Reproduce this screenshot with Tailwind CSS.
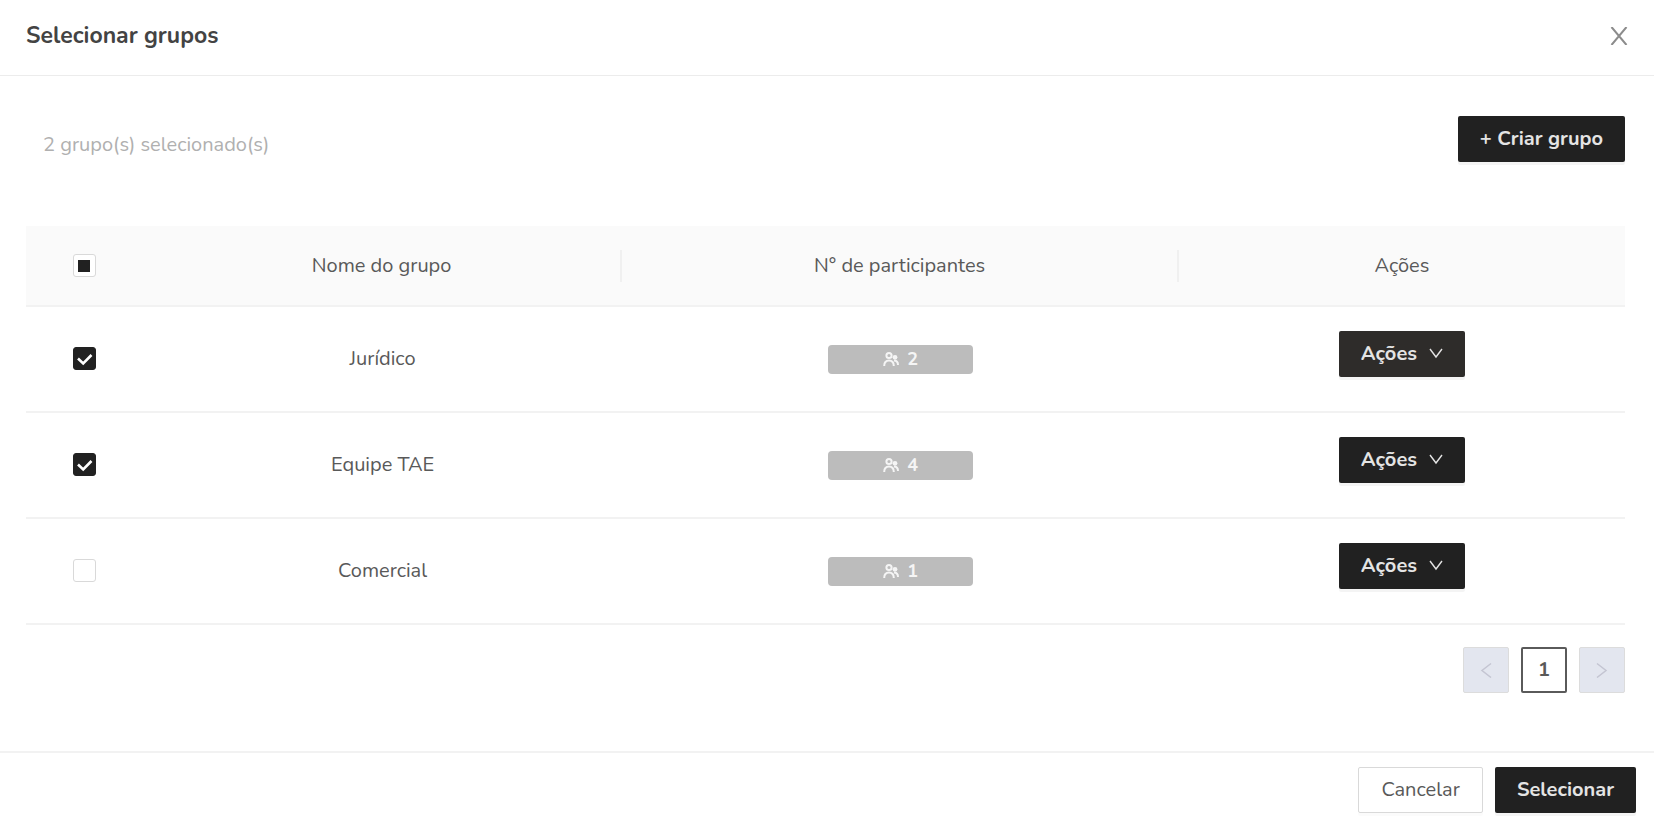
<!DOCTYPE html>
<html lang="pt-BR">
<head>
<meta charset="utf-8">
<meta name="viewport" content="width=device-width, initial-scale=1">
<title>Selecionar grupos</title>
<script src="https://cdn.jsdelivr.net/npm/@tailwindcss/browser@4"></script>
</head>
<body class="min-h-screen bg-white font-['Nunito','Lato',sans-serif] text-xl text-[#595959]">
<svg class="hidden" aria-hidden="true">
  <symbol id="team" viewBox="0 0 16 16" fill="none" stroke="currentColor">
    <circle cx="6" cy="4.500" r="2.600" stroke-width="2"/>
    <path d="M1.200 15c0-3.800 2-5.500 4.800-5.500s4.800 1.700 4.800 5.500" stroke-width="2"/>
    <path d="M11 9.500c2.500 0 4 1.500 4 4.500" stroke-width="2"/>
    <circle cx="12" cy="6.300" r="2.400" fill="currentColor" stroke="none"/>
  </symbol>
  <symbol id="down" viewBox="0 0 14 14" fill="none" stroke="currentColor" stroke-width="1.4">
    <path d="M1 2l6 8 6-8"/>
  </symbol>
</svg>
<main>
  <header class="flex h-[76px] items-center justify-between border-b border-[#ececec] px-[26px] pb-1">
    <h1 class="text-[23px] leading-8 font-bold text-[#434343]">Selecionar grupos</h1>
    <button type="button" aria-label="Fechar" class="text-[#8c8c8c]">
      <svg class="h-[18px] w-[18px]" viewBox="0 0 18 18" fill="none" stroke="currentColor" stroke-width="2"><path d="M1.500 0l15 18M16.500 0l-15 18"/></svg>
    </button>
  </header>

  <section class="pt-10 pr-[29px] pb-[58px] pl-[26px]">
    <div class="flex items-start justify-between pb-16">
      <p class="pt-[15px] pl-[17px] leading-7 text-[#b0b0b0]">2 grupo(s) selecionado(s)</p>
      <button type="button" class="h-[46px] rounded-[2px] bg-[#212121] px-[22px] font-bold text-[#e4e4e4] shadow-[0_3px_0_rgba(0,0,0,0.045)]">+ Criar grupo</button>
    </div>

    <table class="w-full table-fixed border-separate border-spacing-0 text-center">
      <colgroup><col class="w-[7.3%]"><col class="w-[30%]"><col class="w-[34.8%]"><col></colgroup>
      <thead>
        <tr class="h-[81px] bg-[#fafafa]">
          <th class="border-b-2 border-[#f2f2f2]"><input id="all" type="checkbox" aria-label="Selecionar todos" class="block mx-auto h-[23px] w-[23px] appearance-none rounded-[3px] border border-[#d9d9d9] bg-white bg-[linear-gradient(#212121,#212121)] bg-size-[12px_12px] bg-center bg-no-repeat"></th>
          <th class="border-b-2 border-[#f2f2f2] font-normal"><div class="border-r-2 border-[#f0f0f0] leading-8">Nome do grupo</div></th>
          <th class="border-b-2 border-[#f2f2f2] font-normal"><div class="border-r-2 border-[#f0f0f0] leading-8">N° de participantes</div></th>
          <th class="border-b-2 border-[#f2f2f2] font-normal">Ações</th>
        </tr>
      </thead>
      <tbody>
        <tr class="h-[106px]">
          <td class="border-b-2 border-[#f2f2f2] pb-[2px]"><span class="relative mx-auto block h-[23px] w-[23px]"><input id="g1" type="checkbox" checked class="block h-full w-full appearance-none rounded-[3px] border border-[#d9d9d9] checked:border-[#212121] checked:bg-[#212121]"><svg class="pointer-events-none absolute inset-0" viewBox="0 0 23 23" fill="none" stroke="#fff" stroke-width="2.6"><path d="M5 11.500l5.200 5L18.500 8"/></svg></span></td>
          <td class="border-b-2 border-[#f2f2f2]"><label for="g1">Jurídico</label></td>
          <td class="border-b-2 border-[#f2f2f2]"><span class="mx-auto flex h-[29px] w-[145px] items-center justify-center gap-2 rounded bg-[#bcbcbc] text-lg leading-6 font-bold text-[#f5f5f5]"><svg class="h-4 w-4"><use href="#team"/></svg>2</span></td>
          <td class="border-b-2 border-[#f2f2f2] pb-[11px]"><button type="button" class="inline-flex h-[46px] items-center gap-3 rounded-[2px] bg-[#2e2c2a] px-[22px] align-middle font-bold text-[#e4e4e4] shadow-[0_3px_0_rgba(0,0,0,0.045)]">Ações<svg class="h-[14px] w-[14px]"><use href="#down"/></svg></button></td>
        </tr>
        <tr class="h-[106px]">
          <td class="border-b-2 border-[#f2f2f2] pb-[2px]"><span class="relative mx-auto block h-[23px] w-[23px]"><input id="g2" type="checkbox" checked class="block h-full w-full appearance-none rounded-[3px] border border-[#d9d9d9] checked:border-[#212121] checked:bg-[#212121]"><svg class="pointer-events-none absolute inset-0" viewBox="0 0 23 23" fill="none" stroke="#fff" stroke-width="2.6"><path d="M5 11.500l5.200 5L18.500 8"/></svg></span></td>
          <td class="border-b-2 border-[#f2f2f2]"><label for="g2">Equipe TAE</label></td>
          <td class="border-b-2 border-[#f2f2f2]"><span class="mx-auto flex h-[29px] w-[145px] items-center justify-center gap-2 rounded bg-[#bcbcbc] text-lg leading-6 font-bold text-[#f5f5f5]"><svg class="h-4 w-4"><use href="#team"/></svg>4</span></td>
          <td class="border-b-2 border-[#f2f2f2] pb-[11px]"><button type="button" class="inline-flex h-[46px] items-center gap-3 rounded-[2px] bg-[#212121] px-[22px] align-middle font-bold text-[#e4e4e4] shadow-[0_3px_0_rgba(0,0,0,0.045)]">Ações<svg class="h-[14px] w-[14px]"><use href="#down"/></svg></button></td>
        </tr>
        <tr class="h-[106px]">
          <td class="border-b-2 border-[#f2f2f2] pb-[2px]"><input id="g3" type="checkbox" class="mx-auto block h-[23px] w-[23px] appearance-none rounded-[3px] border border-[#d9d9d9]"></td>
          <td class="border-b-2 border-[#f2f2f2]"><label for="g3">Comercial</label></td>
          <td class="border-b-2 border-[#f2f2f2]"><span class="mx-auto flex h-[29px] w-[145px] items-center justify-center gap-2 rounded bg-[#bcbcbc] text-lg leading-6 font-bold text-[#f5f5f5]"><svg class="h-4 w-4"><use href="#team"/></svg>1</span></td>
          <td class="border-b-2 border-[#f2f2f2] pb-[11px]"><button type="button" class="inline-flex h-[46px] items-center gap-3 rounded-[2px] bg-[#212121] px-[22px] align-middle font-bold text-[#e4e4e4] shadow-[0_3px_0_rgba(0,0,0,0.045)]">Ações<svg class="h-[14px] w-[14px]"><use href="#down"/></svg></button></td>
        </tr>
      </tbody>
    </table>

    <nav aria-label="Paginação" class="flex justify-end gap-3 pt-[22px]">
      <button type="button" disabled aria-label="Página anterior" class="flex h-[46px] w-[46px] items-center justify-center rounded-[2px] border border-[#dcdcdc] bg-[#e3e6ef] text-[#c4c5d2]"><svg class="h-4 w-4" viewBox="0 0 16 16" fill="none" stroke="currentColor" stroke-width="1.5"><path d="M13 1.500L4 8.500l9 7"/></svg></button>
      <button type="button" aria-current="page" class="h-[46px] w-[46px] rounded-[2px] border-2 border-[#5a5a5a] font-bold">1</button>
      <button type="button" disabled aria-label="Próxima página" class="flex h-[46px] w-[46px] items-center justify-center rounded-[2px] border border-[#dcdcdc] bg-[#e3e6ef] text-[#c4c5d2]"><svg class="h-4 w-4" viewBox="0 0 16 16" fill="none" stroke="currentColor" stroke-width="1.5"><path d="M3 1.500l9 7-9 7"/></svg></button>
    </nav>
  </section>

  <footer class="flex justify-end gap-3 border-t-2 border-[#f2f2f2] pt-[14px] pr-[18px] pb-4">
    <button type="button" class="h-[46px] rounded-[2px] border border-[#d9d9d9] px-[22px] shadow-[0_3px_0_rgba(0,0,0,0.015)]">Cancelar</button>
    <button type="button" class="h-[46px] rounded-[2px] bg-[#212121] px-[22px] font-bold text-[#e4e4e4] shadow-[0_3px_0_rgba(0,0,0,0.045)]">Selecionar</button>
  </footer>
</main>
</body>
</html>
